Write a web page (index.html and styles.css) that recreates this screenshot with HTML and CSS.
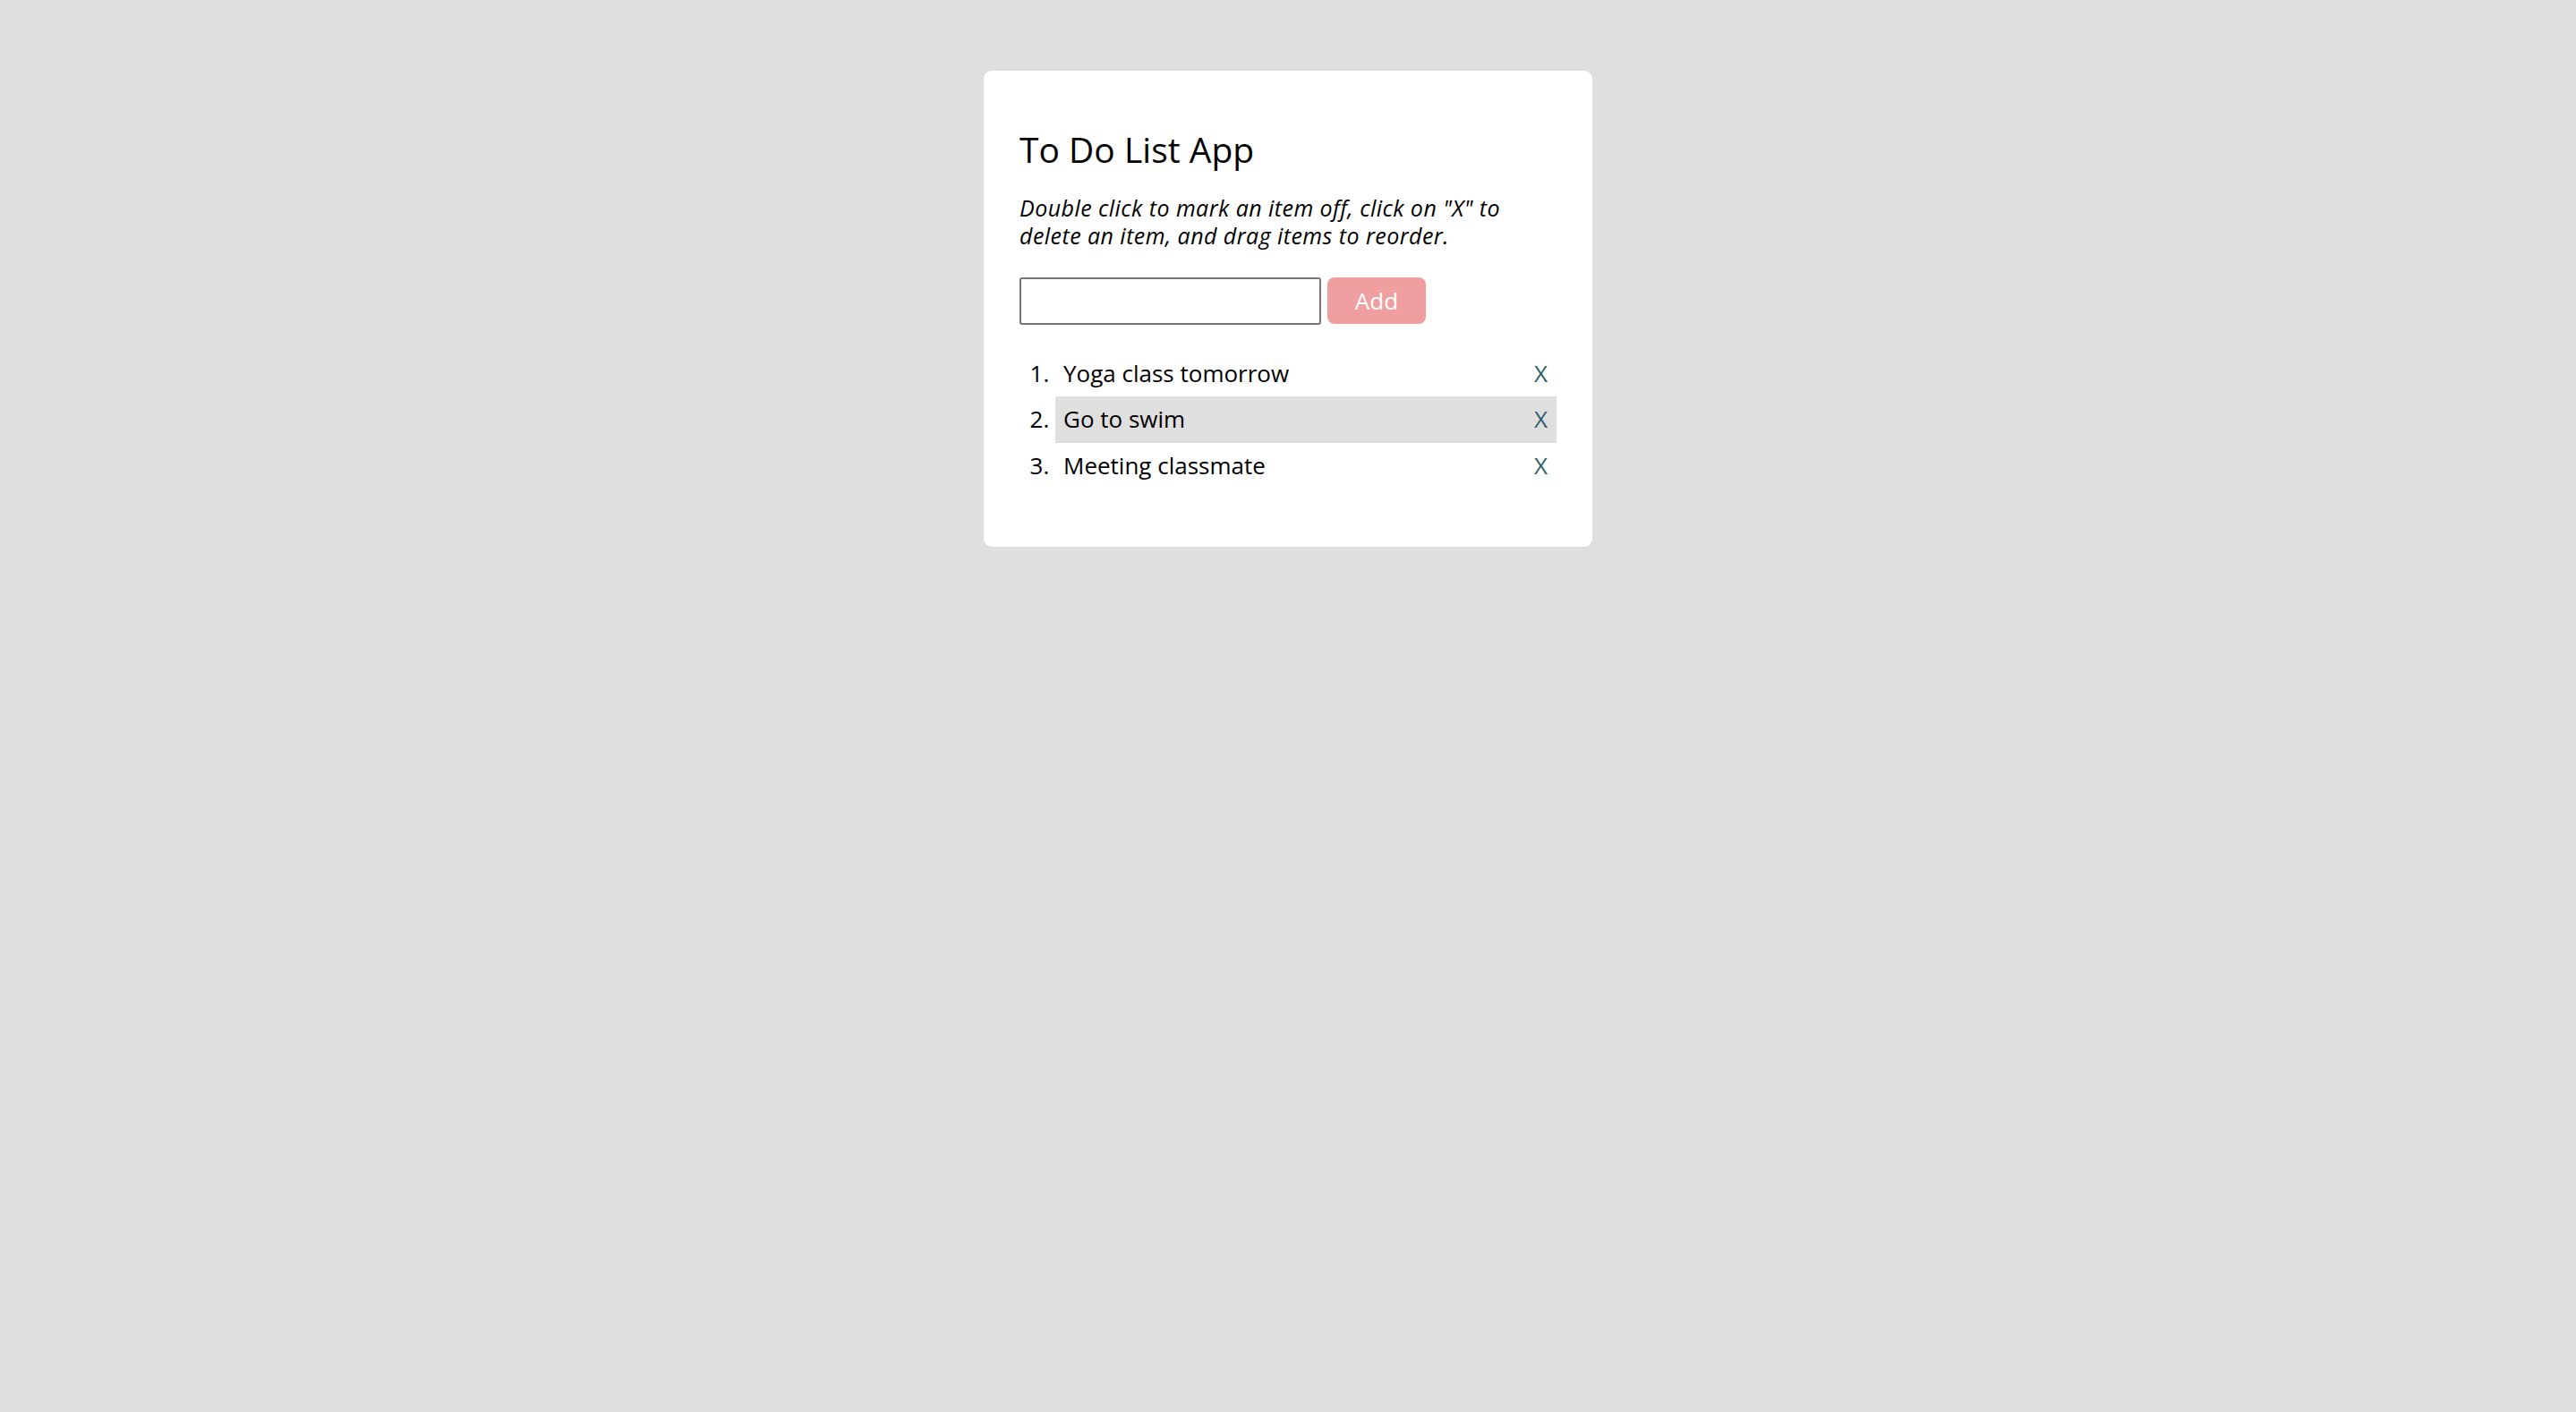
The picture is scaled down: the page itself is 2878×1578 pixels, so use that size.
FILE: index.html
```html
<!DOCTYPE html>
<html lang="en">
<head>
<meta charset="utf-8">
<title>To Do List App</title>
<link rel="stylesheet" href="styles.css">
</head>
<body>
<div class="card">
  <h1 class="title">To Do List App</h1>
  <p class="hint">Double click to mark an item off, click on "X" to delete an item, and drag items to reorder.</p>
  <form class="add-form">
    <input class="add-input" type="text">
    <button class="add-btn" type="button">Add</button>
  </form>
  <ol class="todo-list">
    <li class="todo-item"><span class="delete">X</span>Yoga class tomorrow</li>
    <li class="todo-item is-hover"><span class="delete">X</span>Go to swim</li>
    <li class="todo-item"><span class="delete">X</span>Meeting classmate</li>
  </ol>
</div>
</body>
</html>
```
FILE: styles.css
```css
html, body {
  margin: 0;
  padding: 0;
}
body {
  background: #dfdfdf;
  font-family: "Open Sans", "Liberation Sans", sans-serif;
  color: #000;
  min-height: 100vh;
}
.card {
  width: 600px;
  margin: 79px auto 0;
  padding: 40px;
  background: #fff;
  border-radius: 9px;
}
.title {
  font-size: 39px;
  font-weight: 400;
  margin: 21px 0 0;
  line-height: 54.5px;
}
.hint {
  font-style: italic;
  font-size: 25px;
  letter-spacing: 0.45px;
  line-height: 31px;
  margin: 22px 0 0;
}
.add-form {
  display: flex;
  align-items: flex-start;
  gap: 7px;
  margin-top: 31px;
}
.add-input {
  box-sizing: border-box;
  width: 337px;
  height: 53px;
  border: 2px solid #767676;
  border-radius: 3px;
  margin: 0;
  padding: 0 8px;
  font-size: 26px;
  font-family: inherit;
}
.add-btn {
  box-sizing: border-box;
  width: 110px;
  height: 52px;
  border: none;
  border-radius: 8px;
  background: #ef9f9f;
  color: #fff;
  font-family: inherit;
  font-size: 26px;
  padding: 0;
  margin: 0;
}
.todo-list {
  margin: 29px 0 25px;
  padding-left: 40px;
}
.todo-item {
  font-size: 26px;
  line-height: 35.5px;
  padding: 8px 10px 8px 9px;
}
.todo-item.is-hover {
  background: #dfdfdf;
}
.delete {
  float: right;
  color: #2e5f6d;
}
```
